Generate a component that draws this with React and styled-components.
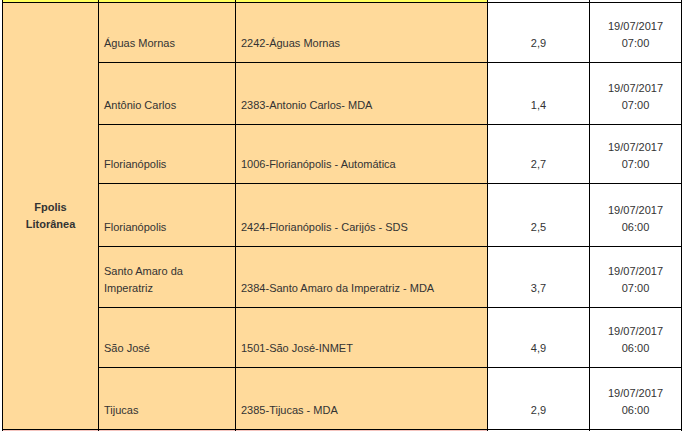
import React from 'react'
import styled, { createGlobalStyle } from 'styled-components'

const rows = [
  { city: 'Águas Mornas', station: '2242-Águas Mornas', value: '2,9', date: '19/07/2017', time: '07:00', h: 60 },
  { city: 'Antônio Carlos', station: '2383-Antonio Carlos- MDA', value: '1,4', date: '19/07/2017', time: '07:00', h: 62 },
  { city: 'Florianópolis', station: '1006-Florianópolis - Automática', value: '2,7', date: '19/07/2017', time: '07:00', h: 59 },
  { city: 'Florianópolis', station: '2424-Florianópolis - Carijós - SDS', value: '2,5', date: '19/07/2017', time: '06:00', h: 63 },
  { city: 'Santo Amaro da Imperatriz', station: '2384-Santo Amaro da Imperatriz - MDA', value: '3,7', date: '19/07/2017', time: '07:00', h: 61 },
  { city: 'São José', station: '1501-São José-INMET', value: '4,9', date: '19/07/2017', time: '06:00', h: 60 },
  { city: 'Tijucas', station: '2385-Tijucas - MDA', value: '2,9', date: '19/07/2017', time: '06:00', h: 62 },
]

function App() {
  return (
    <>
      <GlobalStyle />
      <Table>
        <colgroup>
          <col style={{ width: 96 }} />
          <col style={{ width: 137 }} />
          <col style={{ width: 252 }} />
          <col style={{ width: 102 }} />
          <col style={{ width: 92 }} />
        </colgroup>
        <tbody>
          <EdgeRow>
            <EdgeCell $bg="#ffff5e" />
            <EdgeCell $bg="#ffff5e" />
            <EdgeCell $bg="#ffff5e" />
            <EdgeCell $bg="#fff" />
            <EdgeCell $bg="#fff" />
          </EdgeRow>
          {rows.map((r, i) => (
            <tr key={i}>
              {i === 0 && (
                <RegionCell rowSpan={rows.length}>
                  Fpolis<br />Litorânea
                </RegionCell>
              )}
              <Cell style={{ height: r.h }}>{r.city}</Cell>
              <Cell>{r.station}</Cell>
              <NumCell>{r.value}</NumCell>
              <NumCell>
                {r.date}
                <br />
                {r.time}
              </NumCell>
            </tr>
          ))}
          <EdgeRow>
            <EdgeCell $bg="#f4c4bf" />
            <EdgeCell $bg="#f4c4bf" />
            <EdgeCell $bg="#f4c4bf" />
            <EdgeCell $bg="#fff" />
            <EdgeCell $bg="#fff" />
          </EdgeRow>
        </tbody>
      </Table>
    </>
  )
}

export default App

const GlobalStyle = createGlobalStyle`
  *{
    box-sizing: border-box;
  }
  body{
    margin: 0;
    background: #fff;
    overflow: hidden;
  }
`

const Table = styled.table`
  margin-left: 2px;
  width: 680px;
  table-layout: fixed;
  border-collapse: separate;
  border-spacing: 0;
  border-left: 1px solid #000;
  font-family: "Liberation Sans", Arial, sans-serif;
  font-size: 11px;
  line-height: 17px;
  color: #333;
`

const EdgeRow = styled.tr`
  height: 3px;
`

const EdgeCell = styled.td`
  height: 3px;
  padding: 0;
  font-size: 0;
  line-height: 0;
  background: ${p => p.$bg};
  border-right: 1px solid #000;
  border-bottom: 1px solid #000;
`

const Cell = styled.td`
  background: #ffda9b;
  padding: 0 5px 10px;
  vertical-align: bottom;
  text-align: left;
  border-right: 1px solid #000;
  border-bottom: 1px solid #000;
`

const NumCell = styled(Cell)`
  background: #fff;
  text-align: center;
`

const RegionCell = styled(Cell)`
  vertical-align: middle;
  text-align: center;
  font-weight: bold;
  padding: 0 5px;
`
